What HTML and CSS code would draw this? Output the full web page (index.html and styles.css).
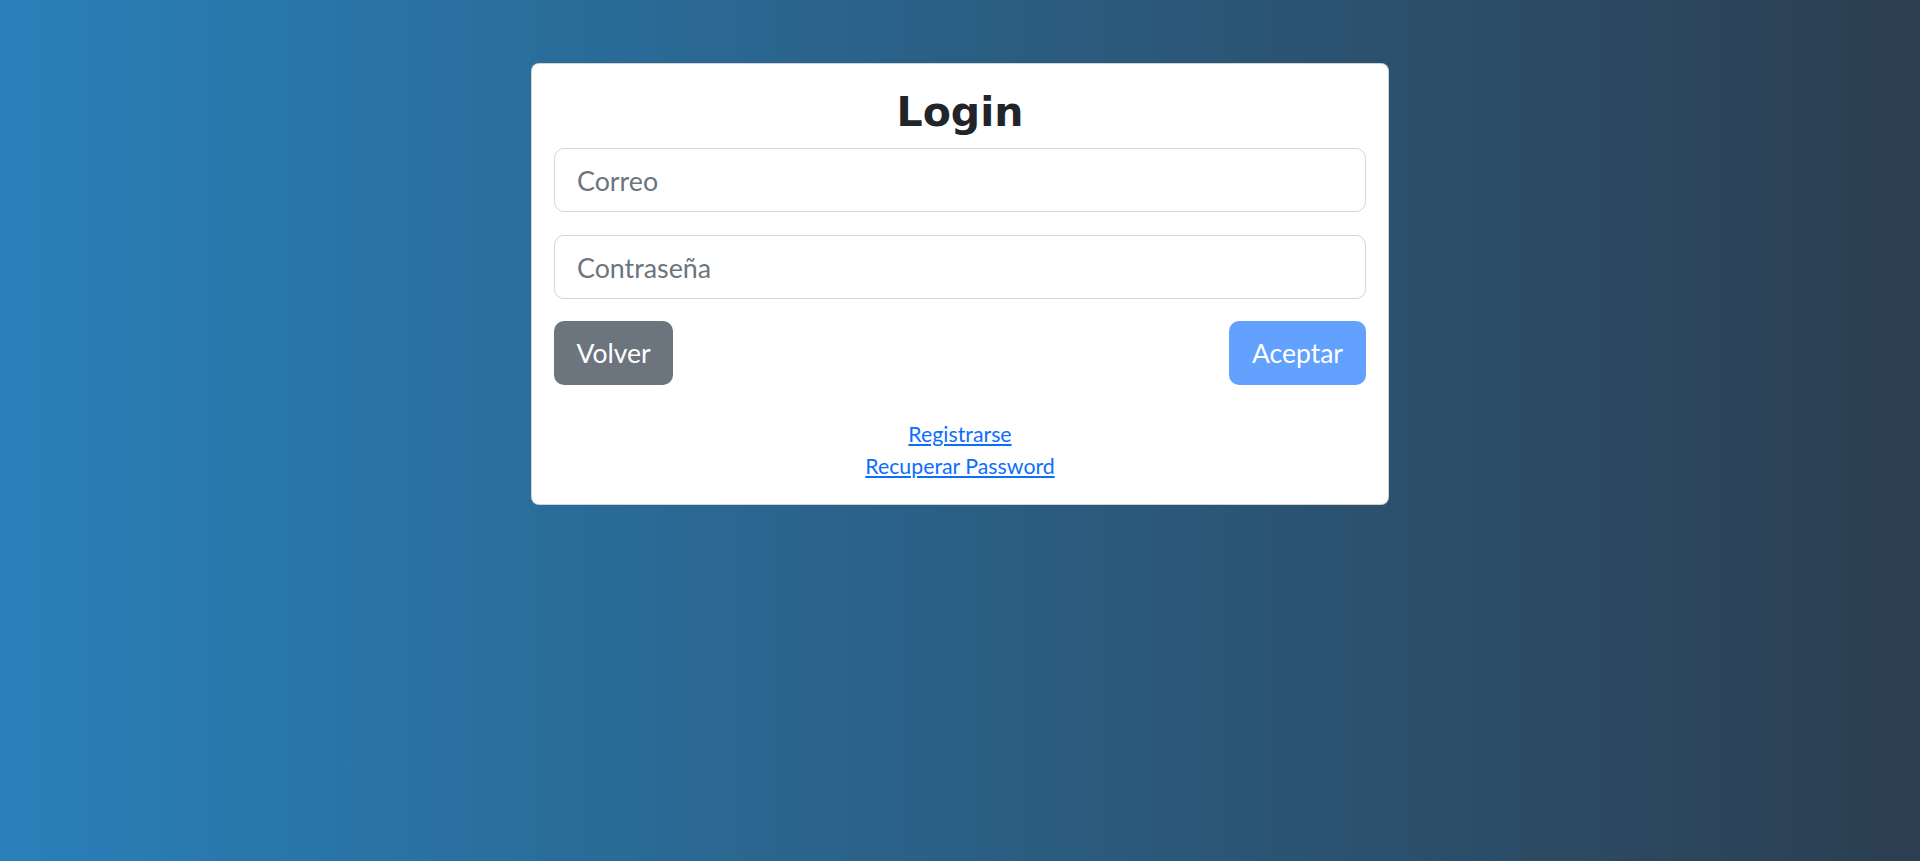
FILE: index.html
```html
<!DOCTYPE html>
<html lang="es">
<head>
<meta charset="utf-8">
<title>Login</title>
<link rel="stylesheet" href="styles.css">
</head>
<body>
<main class="page">
  <form class="card">
    <h2 class="title">Login</h2>
    <input class="field" type="email" placeholder="Correo">
    <input class="field" type="password" placeholder="Contraseña">
    <div class="actions">
      <button type="button" class="btn btn-secondary">Volver</button>
      <button type="button" class="btn btn-primary">Aceptar</button>
    </div>
    <div class="links">
      <a href="#" class="link">Registrarse</a>
      <a href="#" class="link">Recuperar Password</a>
    </div>
  </form>
</main>
</body>
</html>
```
FILE: styles.css
```css
html, body {
  margin: 0;
  padding: 0;
  height: 100%;
}
body {
  background: linear-gradient(to right, #2980b9, #2c3e50);
  font-family: "Lato", "Open Sans", sans-serif;
  color: #212529;
}
.page {
  display: flex;
  justify-content: center;
  padding-top: 63px;
}
.card {
  width: 858px;
  box-sizing: border-box;
  background: #fff;
  border: 1px solid rgba(0,0,0,0.175);
  border-radius: 8px;
  padding: 22px;
  display: flex;
  flex-direction: column;
}
.title {
  margin: 0 0 10px;
  font-family: "DejaVu Sans", sans-serif;
  font-weight: 700;
  font-size: 41px;
  line-height: 52px;
  text-align: center;
  color: #212529;
}
.field {
  display: block;
  box-sizing: border-box;
  width: 100%;
  height: 64px;
  margin: 0 0 23px;
  padding: 2px 22px 0;
  border: 1px solid #d3d6da;
  border-radius: 10px;
  font-family: "Lato", "Open Sans", sans-serif;
  font-size: 26.8px;
  color: #212529;
  background: #fff;
  outline: none;
}
.field::placeholder {
  color: #6c757d;
}
.actions {
  display: flex;
  justify-content: space-between;
  margin-top: -1px;
}
.btn {
  height: 64px;
  padding: 0 22px;
  border: 1px solid transparent;
  border-radius: 10px;
  font-family: "Lato", "Open Sans", sans-serif;
  font-size: 26.5px;
  color: #fff;
  cursor: pointer;
}
.btn-secondary {
  background: #6c757d;
  padding: 0 21.5px;
}
.btn-primary {
  background: #62a1fe;
  padding: 0 22px;
}
.links {
  display: flex;
  flex-direction: column;
  align-items: center;
  margin-top: 33px;
}
.link {
  font-size: 21.3px;
  line-height: 32px;
  color: #0d6efd;
  text-decoration: underline;
}
```
